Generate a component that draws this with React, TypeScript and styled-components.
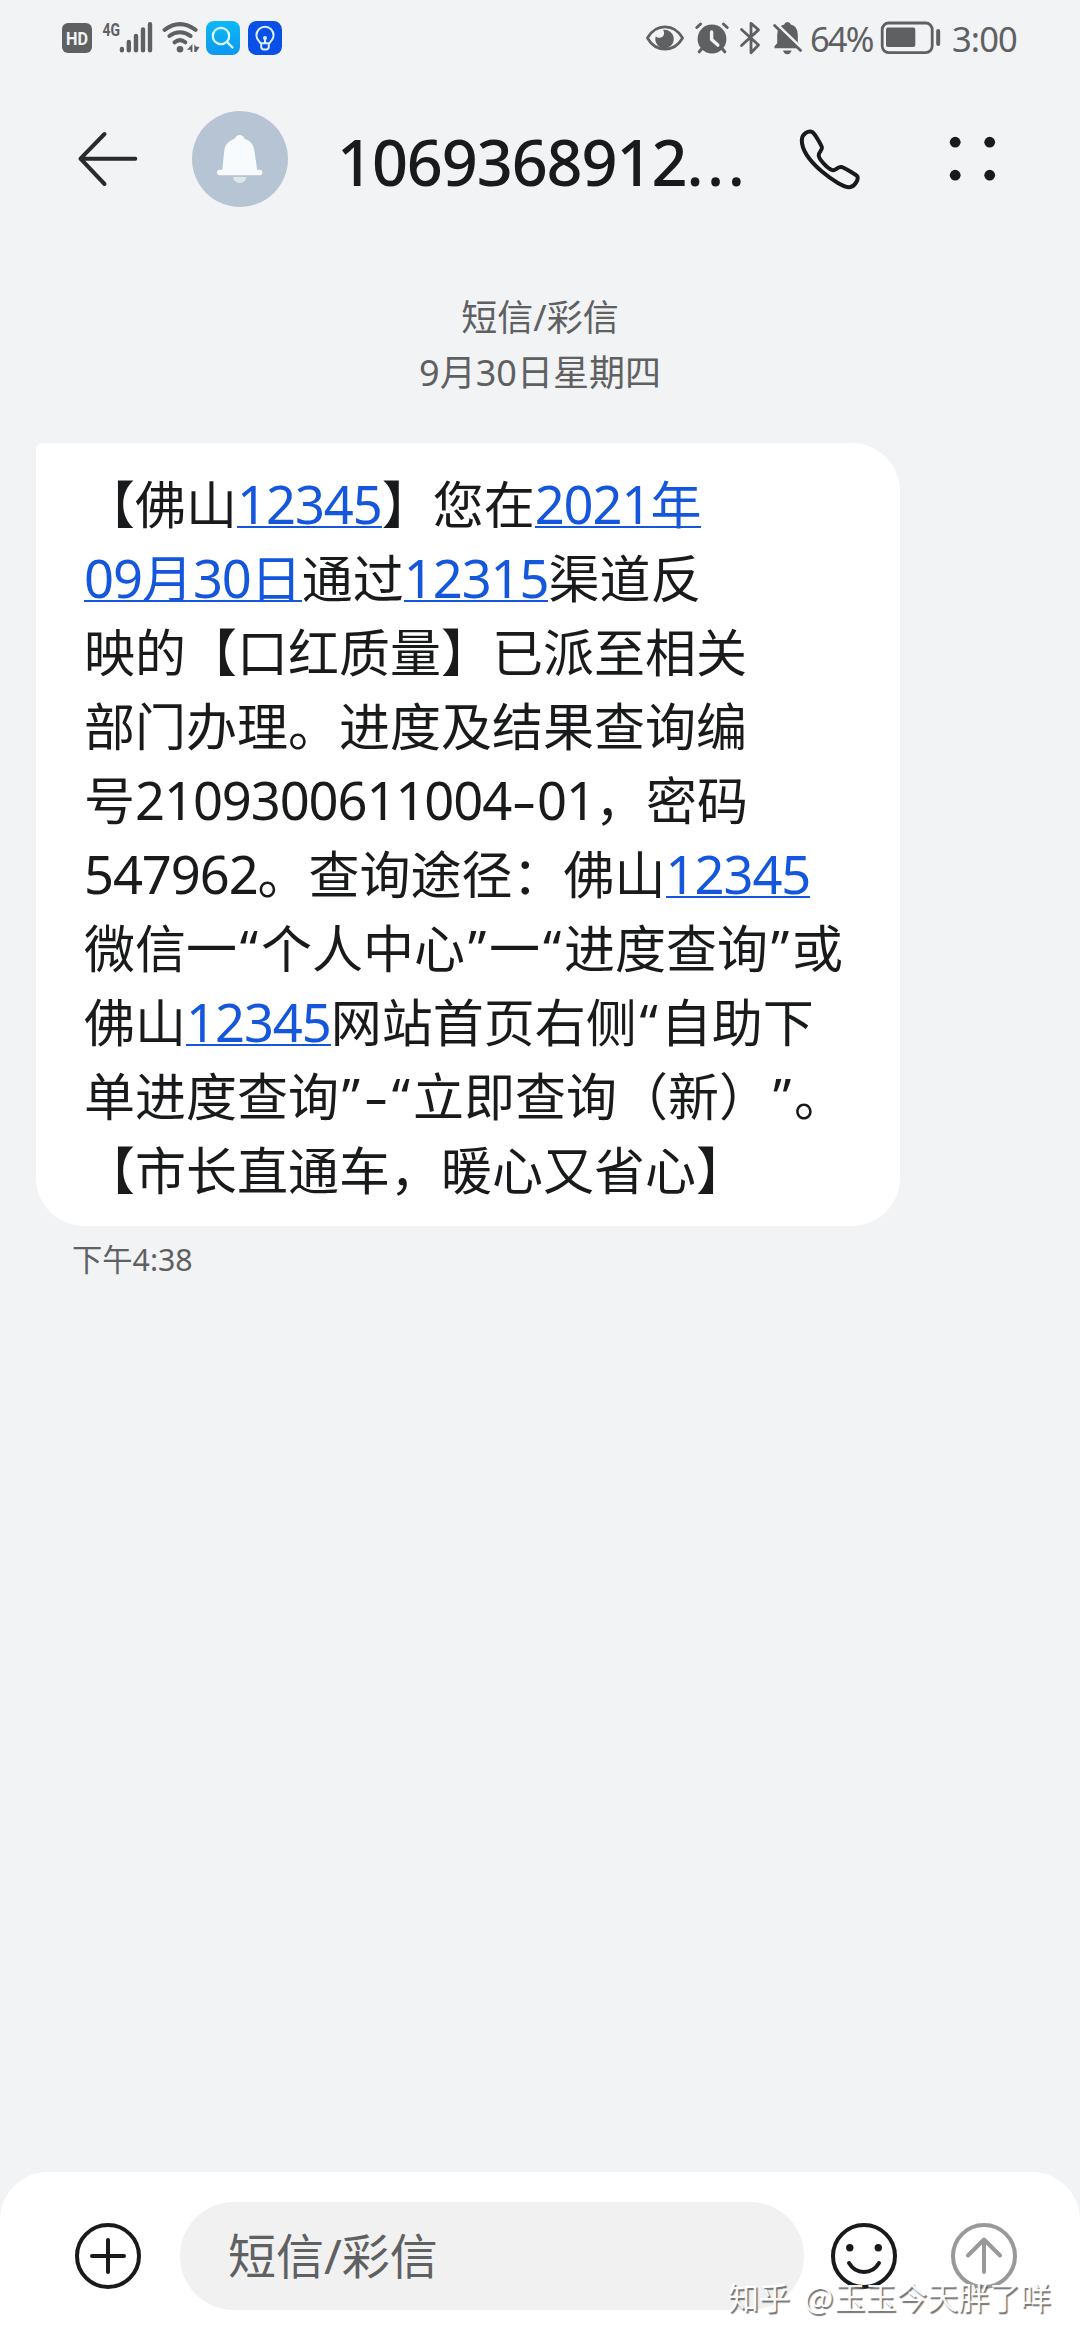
import React from "react";
import styled, { createGlobalStyle } from "styled-components";

const INK = "#191a1b";
const GREY = "#5f6062";

const GlobalStyle = createGlobalStyle`
  * { box-sizing: border-box; }
  html, body { margin: 0; padding: 0; background: #f1f3f5; }
  body {
    font-family: "Noto Sans", "Noto Sans CJK SC", sans-serif;
    color: ${INK};
    text-spacing-trim: space-all;
  }
`;

const Screen = styled.div`
  width: 1080px;
  height: 2340px;
  display: flex;
  flex-direction: column;
  background: #f1f3f5;
  overflow: hidden;
  position: relative;
`;

const StatusBar = styled.div`
  height: 76px;
  padding: 0 63px 0 62px;
  display: flex;
  justify-content: space-between;
  align-items: center;
`;

const StatusGroup = styled.div`
  display: flex;
  align-items: center;
  height: 76px;
`;

const Drawing = styled.svg<{ $ml?: number }>`
  display: block;
  flex: none;
  margin-left: ${(p) => p.$ml ?? 0}px;
`;

const StatusText = styled.span<{ $ml: number; $width: number; $spacing: number }>`
  font-family: "Noto Sans", sans-serif;
  font-size: 34.5px;
  font-weight: 400;
  line-height: 76px;
  padding-top: 1px;
  color: ${GREY};
  margin-left: ${(p) => p.$ml}px;
  width: ${(p) => p.$width}px;
  letter-spacing: ${(p) => p.$spacing}px;
  white-space: nowrap;
`;

const Header = styled.header`
  height: 166px;
  padding: 0 84px 0 77px;
  display: flex;
  align-items: center;
`;

const Avatar = styled.div`
  width: 96px;
  height: 96px;
  margin-left: 54px;
  border-radius: 50%;
  background: #b6c4d3;
  display: flex;
  align-items: center;
  justify-content: center;
`;

const Title = styled.h1`
  margin: 0 0 0 49px;
  padding-top: 5px;
  width: 461px;
  font-size: 63px;
  line-height: 80px;
  font-weight: 500;
  letter-spacing: -1.1px;
  white-space: nowrap;
`;

const TitleDots = styled.span`
  letter-spacing: 3.6px;
`;

const Conversation = styled.main`
  flex: 1;
  display: flex;
  flex-direction: column;
  align-items: flex-start;
  padding: 48px 36px 0;
`;

const DayLabel = styled.div`
  align-self: center;
  text-align: center;
  font-size: 36px;
  line-height: 55px;
  color: ${GREY};
`;

const Bubble = styled.div`
  width: 864px;
  height: 783px;
  margin-top: 43px;
  padding: 22px 48px;
  background: #fff;
  border-radius: 6px 48px 48px 48px;
`;

const Line = styled.div`
  height: 74px;
  line-height: 74px;
  font-family: "Noto Sans CJK SC", sans-serif;
  font-size: 51px;
  white-space: nowrap;
`;

const Num = styled.span`
  font-family: "Noto Sans", sans-serif;
  font-size: 52.5px;
  line-height: 1;
  letter-spacing: -1.1px;
`;

const Quote = styled.span`
  display: inline-block;
  width: 24px;
  line-height: 1;
  font-family: "Noto Sans", sans-serif;
  text-align: center;
`;

const Hyphen = styled.span`
  display: inline-block;
  width: 26px;
  line-height: 1;
  text-align: center;
  font-family: "Noto Sans", sans-serif;
  transform: scaleX(1.5);
`;

const LinkText = styled.a`
  color: #1557dc;
  text-decoration: none;
  background: linear-gradient(#1557dc, #1557dc) 0 calc(100% - 11px) / 100% 2.4px no-repeat;
`;

const SentAt = styled.div`
  margin: 11px 0 0 36px;
  font-size: 30.3px;
  line-height: 46px;
  color: ${GREY};
`;

const Composer = styled.footer`
  height: 168px;
  padding: 30px 60px 30px 72px;
  display: flex;
  background: #fff;
  border-radius: 48px 48px 0 0;
`;

const IconSlot = styled.div<{ $ml?: number }>`
  height: 108px;
  margin-left: ${(p) => p.$ml ?? 0}px;
  display: flex;
  align-items: center;
`;

const Field = styled.div`
  width: 624px;
  height: 108px;
  margin-left: 36px;
  padding-left: 48px;
  border-radius: 54px;
  background: #f1f1f1;
  color: ${GREY};
  font-size: 48px;
  line-height: 107px;
`;

const Watermark = styled.div`
  position: absolute;
  left: 728px;
  top: 2273px;
  font-family: "Noto Sans CJK SC", sans-serif;
  font-size: 31px;
  line-height: 46px;
  color: rgba(255, 255, 255, 0.95);
  text-shadow: 1.5px 1.5px 1px rgba(70, 70, 70, 0.75);
  white-space: nowrap;
  word-spacing: 7px;
`;

const Handle = styled.span`
  letter-spacing: 1px;
`;

type IconProps = { ml?: number };

const HdIcon = () => (
  <Drawing width={30} height={30} viewBox="62 23 30 30">
    <rect x="62" y="23" width="30" height="30" rx="6" fill={GREY} />
    <text x="77" y="45" textAnchor="middle" textLength="22" lengthAdjust="spacingAndGlyphs"
      fontFamily="Roboto, sans-serif" fontWeight="700" fontSize="19" fill="#f1f3f5">HD</text>
  </Drawing>
);

const SignalIcon = () => (
  <Drawing $ml={10} width={52} height={56} viewBox="102 10 52 56">
    <text x="102.5" y="35.5" textLength="17.5" lengthAdjust="spacingAndGlyphs"
      fontFamily="Roboto, sans-serif" fontWeight="700" fontSize="19" fill={GREY}>4G</text>
    <g stroke={GREY} strokeWidth="4.4" strokeLinecap="round">
      <path d="M121.9 49v1.2M128.8 42v8.2M136 36v14.2M143 29.5v20.7M150 24.2v26" />
    </g>
  </Drawing>
);

const WifiIcon = () => (
  <Drawing $ml={8} width={38} height={36} viewBox="162 20 38 36">
    <g fill="none" stroke={GREY} strokeWidth="4" strokeLinecap="round">
      <path d="M164.6 29.8Q179.7 18.5 195.6 29.8" />
      <path d="M169.4 36Q179.7 28.5 190.6 36" />
      <path d="M174.5 42.3Q180 38 185.3 42.3" />
    </g>
    <circle cx="180" cy="49.2" r="3.3" fill={GREY} />
    <path d="M192.4 44v8h-1.800v-2.200h-3.600zM194.3 44l1.500 2.600 3.700.4-3.200 5h-2z" fill={GREY} />
  </Drawing>
);

const SearchTile = () => (
  <Drawing $ml={6} width={34} height={34} viewBox="0 0 34 34">
    <defs>
      <linearGradient id="searchTile" x1="0" y1="0" x2="0" y2="1">
        <stop offset="0" stopColor="#0cb9f6" />
        <stop offset="1" stopColor="#0f97ee" />
      </linearGradient>
    </defs>
    <rect width="34" height="34" rx="8" fill="url(#searchTile)" />
    <circle cx="15" cy="15" r="8.2" fill="none" stroke="#d9ffff" strokeWidth="2.2" />
    <path d="M21 21l5.5 5.5" stroke="#d9ffff" strokeWidth="2.4" strokeLinecap="round" />
  </Drawing>
);

const BulbTile = () => (
  <Drawing $ml={8} width={34} height={34} viewBox="0 0 34 34">
    <rect width="34" height="34" rx="8.5" fill="#0b50e6" />
    <g fill="none" stroke="#d9f0ff" strokeWidth="2" strokeLinecap="round" strokeLinejoin="round">
      <path d="M12.7 22.3C10.8 19.8 8.4 18.2 8.4 14.4a8.6 8.6 0 0 1 17.2 0c0 3.8-2.4 5.4-4.3 7.9z" />
      <path d="M13.2 23.5v2.2q0 2.7 2.7 2.7h2.2q2.7 0 2.7-2.7v-2.2M17 18v4" />
    </g>
    <circle cx="17" cy="17" r="2" fill="#d9f0ff" />
  </Drawing>
);

const EyeIcon = () => (
  <Drawing width={40} height={34} viewBox="645 20 40 34">
    <path d="M647.4 37C656 22.2 674 22.2 682.6 37 674 51.8 656 51.8 647.4 37z" fill="none" stroke={GREY} strokeWidth="2.7" strokeLinejoin="round" />
    <path d="M663 29a9.2 9.2 0 1 1-7.2 6.2 4.4 4.4 0 0 0 7.2-6.2z" fill={GREY} />
  </Drawing>
);

const AlarmIcon = () => (
  <Drawing $ml={9} width={36} height={36} viewBox="694 19 36 36">
    <circle cx="712" cy="38" r="14.4" fill={GREY} />
    <g stroke={GREY} strokeWidth="3" strokeLinecap="round">
      <path d="M696.8 26.5l3.8-3.5M727.2 26.5l-3.8-3.5M702.5 47l-3.3 3.8M721.5 47l3.3 3.8" />
    </g>
    <path d="M711.6 31v7.5l6.2 5.6" fill="none" stroke="#f1f3f5" strokeWidth="3.4" strokeLinecap="round" strokeLinejoin="round" />
  </Drawing>
);

const BluetoothIcon = () => (
  <Drawing $ml={9} width={22} height={36} viewBox="739 19 22 36">
    <path d="M741.5 28.5l17 15.5-7.5 7.7V22.3l7.5 6.6-17 15.6" fill="none" stroke={GREY} strokeWidth="2.8" strokeLinecap="round" strokeLinejoin="round" />
  </Drawing>
);

const MutedBellIcon = () => (
  <Drawing $ml={11} width={32} height={36} viewBox="772 19 32 36">
    <path d="M774.5 47.3v-2l2.7-3V34q0-8.5 7-10.4a3.4 3.4 0 0 1 6.6 0q7 1.9 7 10.4v7l3 6.3zM783 49.5h8.6q-1 3.7-4.3 3.7t-4.3-3.7z" fill={GREY} />
    <path d="M775.8 22.4l28 27" stroke="#f1f3f5" strokeWidth="3" />
    <path d="M774.6 24.4l26 25" stroke={GREY} strokeWidth="2.8" strokeLinecap="round" />
  </Drawing>
);

const BatteryIcon = () => (
  <Drawing $ml={7} width={61} height={34} viewBox="880 21 61 34">
    <rect x="882.2" y="23" width="50" height="29.6" rx="6.5" fill="none" stroke={GREY} strokeWidth="2.8" />
    <rect x="886" y="27.5" width="29.3" height="19.5" rx="2" fill={GREY} />
    <rect x="936.2" y="29" width="4" height="17" rx="2" fill={GREY} />
  </Drawing>
);

const BackIcon = () => (
  <Drawing width={61} height={60} viewBox="77 129 61 60">
    <path d="M104.5 134L80.5 158.7H135.3M80.5 158.7L104.5 184" fill="none" stroke="#2a2b2d" strokeWidth="4" strokeLinecap="round" strokeLinejoin="round" />
  </Drawing>
);

const BellIcon = () => (
  <Drawing width={48} height={50} viewBox="216 134 48 50">
    <path d="M239.7 135q3 0 5 3.7c6 2.4 9 6 9.8 12.5l2.7 19h-35l2-19c.7-6.5 4-10.1 10.3-12.5q2.2-3.7 5.2-3.7z" fill="#f8fbfd" />
    <rect x="217" y="169.8" width="45.4" height="5.4" rx="2.7" fill="#f8fbfd" />
    <path d="M233 177h13.4q-1.2 6-6.7 6t-6.7-6z" fill="#dfe6ed" />
  </Drawing>
);

const PhoneIcon = () => (
  <Drawing width={64} height={64} viewBox="797 126 64 64">
    <path d="M811.6 131.2C813.7 132.5 820 143.500 820.9 146.200 821.8 149 817.5 151 817.7 154.500 818 158.500 827 168 831.3 169.100 835 170 836.5 165.300 840.5 166 843 166.500 853 172.500 855.8 174.700 858.5 177.500 854 185.800 848.2 186.200 839 186.500 800.5 160 800.8 139 801 133 807.5 128.800 811.6 131.2z" fill="none" stroke={INK} strokeWidth="4" strokeLinejoin="round" />
  </Drawing>
);

const MoreIcon = ({ ml }: IconProps) => (
  <Drawing $ml={ml} width={47} height={46} viewBox="948.5 135.5 47 46">
    <g fill={INK}>
      <circle cx="954.7" cy="141.7" r="5.4" />
      <circle cx="989.2" cy="141.7" r="5.4" />
      <circle cx="954.7" cy="174.7" r="5.4" />
      <circle cx="989.2" cy="174.7" r="5.4" />
    </g>
  </Drawing>
);

const AddIcon = () => (
  <Drawing width={72} height={72} viewBox="0 0 72 72">
    <g fill="none" stroke={INK} strokeWidth="4" strokeLinecap="round">
      <circle cx="36" cy="36" r="31" />
      <path d="M36 20v32M20 36h32" />
    </g>
  </Drawing>
);

const SmileIcon = () => (
  <Drawing width={72} height={72} viewBox="0 0 72 72">
    <g fill="none" stroke={INK} strokeWidth="4" strokeLinecap="round">
      <circle cx="36" cy="36" r="31" />
      <path d="M21 43C28 55 44 55 51 43" />
    </g>
    <circle cx="21.8" cy="27.7" r="3.7" fill={INK} />
    <circle cx="50.3" cy="27.7" r="3.7" fill={INK} />
  </Drawing>
);

const SendIcon = () => (
  <Drawing width={72} height={72} viewBox="0 0 72 72">
    <g fill="none" stroke="#999" strokeWidth="4" strokeLinecap="round" strokeLinejoin="round">
      <circle cx="36" cy="36" r="31" />
      <path d="M36 52V20M20 35.5L36 19.5 52 35.5" />
    </g>
  </Drawing>
);

const LQ = () => <Quote>“</Quote>;
const RQ = () => <Quote>”</Quote>;

export default function App() {
  return (
    <>
      <GlobalStyle />
      <Screen>
        <StatusBar>
          <StatusGroup>
            <HdIcon />
            <SignalIcon />
            <WifiIcon />
            <SearchTile />
            <BulbTile />
          </StatusGroup>
          <StatusGroup>
            <EyeIcon />
            <AlarmIcon />
            <BluetoothIcon />
            <MutedBellIcon />
            <StatusText $ml={6} $width={63} $spacing={-1.9}>64%</StatusText>
            <BatteryIcon />
            <StatusText $ml={11} $width={65} $spacing={-0.9}>3:00</StatusText>
          </StatusGroup>
        </StatusBar>

        <Header>
          <BackIcon />
          <Avatar><BellIcon /></Avatar>
          <Title>1069368912<TitleDots>...</TitleDots></Title>
          <PhoneIcon />
          <MoreIcon ml={87} />
        </Header>

        <Conversation>
          <DayLabel>短信/彩信</DayLabel>
          <DayLabel>9月30日星期四</DayLabel>
          <Bubble>
            <Line>【佛山<LinkText><Num>12345</Num></LinkText>】您在<LinkText><Num>2021</Num>年</LinkText></Line>
            <Line><LinkText><Num>09</Num>月<Num>30</Num>日</LinkText>通过<LinkText><Num>12315</Num></LinkText>渠道反</Line>
            <Line>映的【口红质量】已派至相关</Line>
            <Line>部门办理。进度及结果查询编</Line>
            <Line>号<Num>2109300611004</Num><Hyphen>-</Hyphen><Num>01</Num>，密码</Line>
            <Line><Num>547962</Num>。查询途径：佛山<LinkText><Num>12345</Num></LinkText></Line>
            <Line>微信一<LQ />个人中心<RQ />一<LQ />进度查询<RQ />或</Line>
            <Line>佛山<LinkText><Num>12345</Num></LinkText>网站首页右侧<LQ />自助下</Line>
            <Line>单进度查询<RQ /><Hyphen>-</Hyphen><LQ />立即查询（新）<RQ />。</Line>
            <Line>【市长直通车，暖心又省心】</Line>
          </Bubble>
          <SentAt>下午4:38</SentAt>
        </Conversation>

        <Composer>
          <IconSlot><AddIcon /></IconSlot>
          <Field>短信/彩信</Field>
          <IconSlot $ml={24}><SmileIcon /></IconSlot>
          <IconSlot $ml={48}><SendIcon /></IconSlot>
        </Composer>

        <Watermark>知乎 <Handle>@</Handle>玉玉今天胖了咩</Watermark>
      </Screen>
    </>
  );
}
